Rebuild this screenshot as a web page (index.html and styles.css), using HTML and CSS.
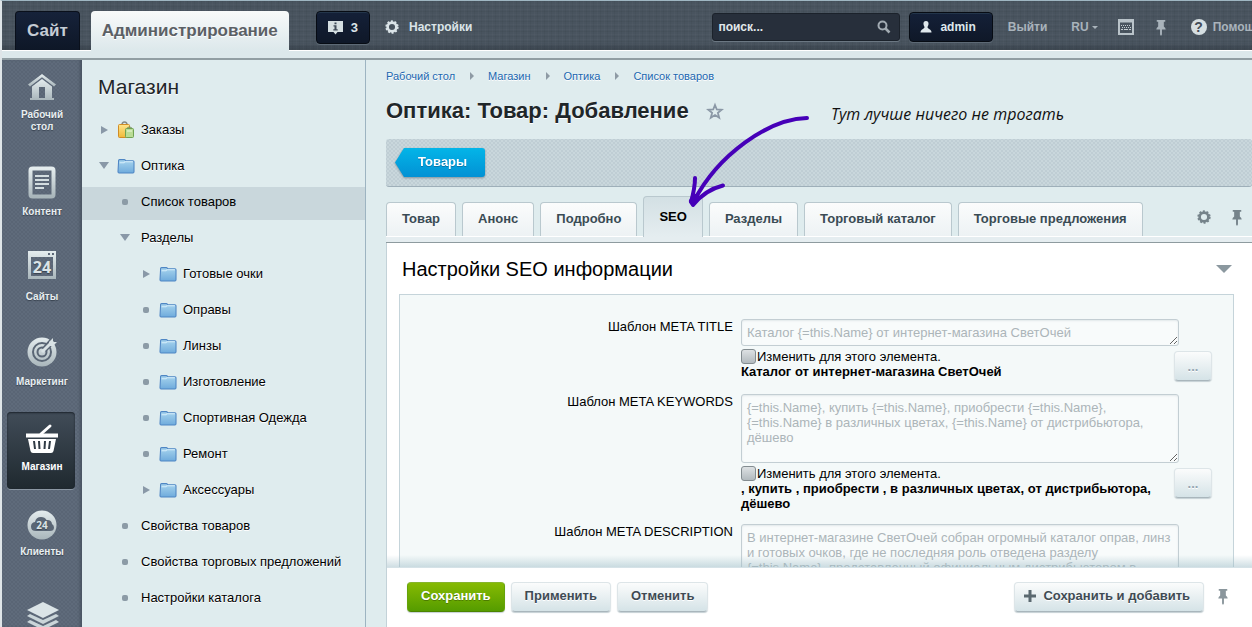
FILE: index.html
```html
<!DOCTYPE html>
<html lang="ru">
<head>
<meta charset="utf-8">
<title>Оптика: Товар: Добавление</title>
<link rel="stylesheet" href="styles.css">
</head>
<body>
<svg class="defs" aria-hidden="true">
  <defs>
    <linearGradient id="silver" x1="0" y1="0" x2="0" y2="1"><stop offset="0" stop-color="#e4ecee"/><stop offset="1" stop-color="#a9b6bb"/></linearGradient>
    <linearGradient id="blue" x1="0" y1="0" x2="0" y2="1"><stop offset="0" stop-color="#a9d5ee"/><stop offset="1" stop-color="#6fabdc"/></linearGradient>
    <linearGradient id="gold" x1="0" y1="0" x2="0" y2="1"><stop offset="0" stop-color="#ffe58a"/><stop offset="1" stop-color="#f0b93a"/></linearGradient>
    <symbol id="folder" viewBox="0 0 16 15"><path d="M1 4V2.500q0-1 1-1h4.500q1 0 1 1h7q1 0 1 1V13q0 1-1 1h-13q-1 0-1-1z" fill="url(#blue)" stroke="#4f86c4"/><path d="M2 4.500h4l1-1h7.500" fill="none" stroke="#d6eefb"/></symbol>
    <symbol id="pin" viewBox="0 0 12 18"><path d="M1.500 1h9v2H9v5q2 1.500 2 3H7v5.500L6 18l-1-1.500V11H1q0-1.500 2-3V3H1.500z" fill="currentColor"/></symbol>
    <symbol id="gear" viewBox="0 0 16 16"><circle cx="8" cy="8" r="5" fill="none" stroke="currentColor" stroke-width="3"/><circle cx="8" cy="8" r="6.700" fill="none" stroke="currentColor" stroke-width="1.800" stroke-dasharray="2.300 1.910"/></symbol>
  </defs>
</svg>
<header class="top">
  <nav class="modes">
    <a class="mode mode-site" href="#">Сайт</a>
    <a class="mode mode-admin" href="#">Администрирование</a>
  </nav>
  <button class="dark-btn notice" type="button">
    <svg width="15" height="15" viewBox="0 0 15 15"><path d="M0 1h15v11H9.500L7.500 14.500 5.500 12H0z" fill="#d5dfe2"/><path d="M6.500 2.500h2v1.700h-2zM5.500 5.300h3v4h1.200v1.200H5.300V9.300h1.200V6.500h-1z" fill="#3f4b58"/></svg>
    <span>3</span>
  </button>
  <a class="settings" href="#"><svg width="14" height="14"><use href="#gear"/></svg><span>Настройки</span></a>
  <div class="top-right">
    <form class="search">
      <input type="text" value="поиск..." aria-label="Поиск">
      <svg width="14" height="14" viewBox="0 0 14 14"><circle cx="5.500" cy="5.500" r="4" fill="none" stroke="#a2abb2" stroke-width="2"/><path d="M8.500 8.500l4 4" stroke="#a2abb2" stroke-width="2.500"/></svg>
    </form>
    <button class="dark-btn user" type="button">
      <svg width="12" height="12" viewBox="0 0 12 12"><path d="M6 0c2 0 2.800 1.500 2.500 3.200C8.300 4.800 7.500 5.500 7.500 6.300 7.500 8 11.500 8 11.500 11.500H.5C.5 8 4.500 8 4.500 6.300 4.500 5.500 3.700 4.800 3.500 3.200 3.200 1.500 4 0 6 0z" fill="#dfe8ec"/></svg>
      <span>admin</span>
    </button>
    <a class="top-link" href="#">Выйти</a>
    <button class="lang" type="button">RU</button>
    <button class="icon-btn keyboard" type="button" aria-label="Горячие клавиши"><svg width="16" height="16" viewBox="0 0 16 16"><path d="M1 1h14v14H1z" fill="none" stroke="#b9c3c9" stroke-width="2"/><path d="M2 2.500h12" stroke="#b9c3c9" stroke-width="2"/><path d="M3 6.500h10M4 8.500h9" stroke="#c4cdd2" stroke-dasharray="1 1"/><path d="M3 10.500h2m1 0h4m1 0h2" stroke="#c4cdd2"/></svg></button>
    <button class="icon-btn" type="button" aria-label="Закрепить"><svg width="12" height="17"><use href="#pin"/></svg></button>
    <a class="help" href="#"><span class="help-mark">?</span>Помощь</a>
  </div>
</header>
<div class="strip"></div>
<div class="layout">
  <nav class="rail">
    <a class="rail-item" href="#"><svg width="36" height="36" viewBox="0 0 36 36"><path d="M18 6L4 16.500l2 2 12-9.200 12 9.200 2-2z" fill="url(#silver)"/><path d="M18 11L8 18.500V30H6v2h24v-2h-2V18.500zM15 19h6v11h-6z" fill="url(#silver)" fill-rule="evenodd"/></svg><span>Рабочий<br>стол</span></a>
    <a class="rail-item" href="#"><svg width="36" height="36" viewBox="0 0 36 36"><rect x="6.500" y="3.500" width="23" height="28" rx="2" fill="none" stroke="url(#silver)" stroke-width="4"/><path d="M11 11h14M11 15h14M11 19h14M11 23h9" stroke="#d3dde0" stroke-width="2"/></svg><span>Контент</span></a>
    <a class="rail-item" href="#"><svg width="36" height="36" viewBox="0 0 36 36"><path d="M4 1h28v28H4zM7 7v19h22V7zM24 3v2h2V3zM28 3v2h2V3z" fill="url(#silver)" fill-rule="evenodd"/><text class="digits" x="18" y="23" font-size="16">24</text></svg><span>Сайты</span></a>
    <a class="rail-item" href="#"><svg width="36" height="36" viewBox="0 0 36 36"><circle cx="18" cy="17" r="14.500" fill="url(#silver)"/><circle cx="18" cy="17" r="9" fill="none" stroke="#5a6675" stroke-width="2"/><circle cx="18" cy="17" r="4.500" fill="none" stroke="#5a6675" stroke-width="2"/><path d="M20 15L30 4" stroke="#5a6675" stroke-width="6"/><path d="M18 17L29 6" stroke="#d9e2e5" stroke-width="3"/><path d="M25 7l4-4v4h4l-4 4h-4z" fill="#d9e2e5"/></svg><span>Маркетинг</span></a>
    <a class="rail-item rail-active" href="#"><svg width="36" height="36" viewBox="0 0 36 36"><path d="M2 13.500h32v4H2zM4 19h28l-2.500 12q-.500 2-2.500 2H9q-2 0-2.500-2z" fill="#fff"/><path d="M17 14L26 6" stroke="#fff" stroke-width="3" stroke-linecap="round"/><path d="M10 21l1 8M15 21l.5 8M21 21l-.5 8M26 21l-1 8" stroke="#303b45" stroke-width="2"/></svg><span>Магазин</span></a>
    <a class="rail-item" href="#"><svg width="36" height="36" viewBox="0 0 36 36"><circle cx="18" cy="20" r="14.500" fill="url(#silver)"/><path d="M12 26q-5 0-5-4.500 0-4 4-4.500Q12 12 17 12q4 0 5.500 3 5-.500 5.500 4 2 1 2 3.500 0 3.500-4 3.500z" fill="#5a6675"/><text class="digits" x="18" y="24" font-size="10">24</text></svg><span>Клиенты</span></a>
    <a class="rail-item" href="#" aria-label="Сервисы"><svg width="36" height="46" viewBox="0 0 36 46"><path d="M19 12l16 8-16 8-16-8z" fill="#dbe4e7"/><path d="M3 26l3-2 13 6 13-6 3 2-16 8zM3 32l3-2 13 6 13-6 3 2-16 8z" fill="#cad5d9"/></svg></a>
  </nav>
  <aside class="menu">
    <h2 class="menu-title">Магазин</h2>
    <ul class="tree">
      <li><a class="row" href="#"><i class="mark closed"></i><svg width="18" height="18" viewBox="0 0 18 18"><path d="M5 4q0-3 2.500-3T10 4" fill="none" stroke="#878b86" stroke-width="1.500"/><rect x="1.500" y="3.500" width="11" height="13" rx="1" fill="url(#gold)" stroke="#d08c26"/><path d="M10 8q0-2 2.500-2T15 8" fill="none" stroke="#789061"/><rect x="8.500" y="7.500" width="8" height="9" rx="1" fill="#b9dc95" stroke="#6fa253"/><path d="M10 10h5" stroke="#edf8df"/></svg>Заказы</a></li>
      <li><a class="row" href="#"><i class="mark open"></i><svg width="18" height="16"><use href="#folder"/></svg>Оптика</a></li>
      <li><a class="row level-2 selected" href="#"><i class="mark dot"></i>Список товаров</a></li>
      <li><a class="row level-2" href="#"><i class="mark open"></i>Разделы</a></li>
      <li><a class="row level-3" href="#"><i class="mark closed"></i><svg width="18" height="16"><use href="#folder"/></svg>Готовые очки</a></li>
      <li><a class="row level-3" href="#"><i class="mark dot"></i><svg width="18" height="16"><use href="#folder"/></svg>Оправы</a></li>
      <li><a class="row level-3" href="#"><i class="mark dot"></i><svg width="18" height="16"><use href="#folder"/></svg>Линзы</a></li>
      <li><a class="row level-3" href="#"><i class="mark dot"></i><svg width="18" height="16"><use href="#folder"/></svg>Изготовление</a></li>
      <li><a class="row level-3" href="#"><i class="mark dot"></i><svg width="18" height="16"><use href="#folder"/></svg>Спортивная Одежда</a></li>
      <li><a class="row level-3" href="#"><i class="mark dot"></i><svg width="18" height="16"><use href="#folder"/></svg>Ремонт</a></li>
      <li><a class="row level-3" href="#"><i class="mark closed"></i><svg width="18" height="16"><use href="#folder"/></svg>Аксессуары</a></li>
      <li><a class="row level-2" href="#"><i class="mark dot"></i>Свойства товаров</a></li>
      <li><a class="row level-2" href="#"><i class="mark dot"></i>Свойства торговых предложений</a></li>
      <li><a class="row level-2" href="#"><i class="mark dot"></i>Настройки каталога</a></li>
    </ul>
  </aside>
  <main class="main">
    <nav class="crumbs">
      <a href="#">Рабочий стол</a><i></i><a href="#">Магазин</a><i></i><a href="#">Оптика</a><i></i><a href="#">Список товаров</a>
    </nav>
    <div class="title-row">
      <h1 class="title">Оптика: Товар: Добавление</h1>
      <button class="icon-btn" type="button" aria-label="В избранное"><svg width="18" height="18" viewBox="0 0 18 18"><path d="M9 3l1.800 4.500 4.900.3-3.800 3.100 1.300 4.800L9 13l-4.200 2.700 1.300-4.800L2.300 7.800l4.900-.3z" fill="none" stroke="#8b98a6" stroke-width="1.800"/></svg></button>
    </div>
    <div class="toolbar">
      <a class="back" href="#"><span>Товары</span></a>
    </div>
    <div class="tabs">
      <button class="tab" type="button">Товар</button>
      <button class="tab" type="button">Анонс</button>
      <button class="tab" type="button">Подробно</button>
      <button class="tab tab-active" type="button">SEO</button>
      <button class="tab" type="button">Разделы</button>
      <button class="tab" type="button">Торговый каталог</button>
      <button class="tab" type="button">Торговые предложения</button>
      <span class="tab-tools">
        <button class="icon-btn" type="button" aria-label="Настроить"><svg width="14" height="14"><use href="#gear"/></svg></button>
        <button class="icon-btn" type="button" aria-label="Закрепить вкладки"><svg width="12" height="17"><use href="#pin"/></svg></button>
      </span>
    </div>
    <div class="tab-line"></div>
    <section class="panel">
      <div class="panel-scroll">
        <div class="panel-head">
          <h2 class="panel-title">Настройки SEO информации</h2>
          <button class="icon-btn collapse" type="button" aria-label="Свернуть"></button>
        </div>
        <div class="fields">
          <label class="label" for="meta-title">Шаблон META TITLE</label>
          <div class="field">
            <textarea class="area area-1" id="meta-title">Каталог {=this.Name} от интернет-магазина СветОчей</textarea>
            <div class="hint">
              <div class="hint-text"><label class="check"><input type="checkbox">Изменить для этого элемента.</label><b>Каталог от интернет-магазина СветОчей</b></div>
              <button class="btn more" type="button">...</button>
            </div>
          </div>
          <label class="label" for="meta-keys">Шаблон META KEYWORDS</label>
          <div class="field">
            <textarea class="area area-3" id="meta-keys">{=this.Name}, купить {=this.Name}, приобрести {=this.Name}, {=this.Name} в различных цветах, {=this.Name} от дистрибьютора, дёшево</textarea>
            <div class="hint">
              <div class="hint-text"><label class="check"><input type="checkbox">Изменить для этого элемента.</label><b>, купить , приобрести , в различных цветах, от дистрибьютора, дёшево</b></div>
              <button class="btn more" type="button">...</button>
            </div>
          </div>
          <label class="label" for="meta-desc">Шаблон META DESCRIPTION</label>
          <div class="field">
            <textarea class="area area-3" id="meta-desc">В интернет-магазине СветОчей собран огромный каталог оправ, линз и готовых очков, где не последняя роль отведена разделу {=this.Name}, представленный официальным дистрибьютором в</textarea>
          </div>
        </div>
      </div>
      <footer class="actions">
        <button class="btn btn-save" type="button">Сохранить</button>
        <button class="btn" type="button">Применить</button>
        <button class="btn" type="button">Отменить</button>
        <button class="btn btn-add" type="button"><svg width="12" height="12" viewBox="0 0 12 12"><path d="M6 0v12M0 6h12" stroke="#5b6970" stroke-width="3"/></svg>Сохранить и добавить</button>
        <button class="icon-btn" type="button" aria-label="Закрепить панель"><svg width="12" height="17"><use href="#pin"/></svg></button>
      </footer>
    </section>
    <div class="note">
      <svg width="130" height="100" viewBox="0 0 130 100"><g fill="none" stroke="#4600b8" stroke-width="4" stroke-linecap="round" stroke-linejoin="round"><path d="M121 9C82 10 32 46 8 92"/><path d="M9 69q0 10-4 24l2 3q12-15 30-19.500"/><path d="M6 92l4-4" stroke-width="6"/></g></svg>
      <span>Тут лучше ничего не трогать</span>
    </div>
  </main>
</div>
</body>
</html>
```
FILE: styles.css
```css
* { box-sizing: border-box; }
body {
  margin: 0;
  height: 100vh;
  display: flex;
  flex-direction: column;
  overflow: hidden;
  border-left: 2px solid #dfe5e8;
  border-top: 1px solid #9fb6c2;
  background: #dfecee;
  font: 13px/15px "Liberation Sans", Arial, sans-serif;
  color: #000;
}
a { color: inherit; text-decoration: none; }
button { font: inherit; color: inherit; border: 0; padding: 0; background: none; white-space: nowrap; }
h1, h2, ul { margin: 0; padding: 0; }
svg { display: block; flex: none; }
.defs { position: absolute; width: 0; height: 0; }
.icon-btn { display: flex; align-items: center; justify-content: center; }

/* top bar */
.top {
  flex: none;
  height: 49px;
  display: flex;
  align-items: flex-start;
  padding: 10px 0 0 13px;
  white-space: nowrap;
  font-weight: bold;
  font-size: 12px;
  color: #dbe4e8;
  background:
    repeating-linear-gradient(90deg, rgba(255,255,255,.02) 0 1px, transparent 1px 3px, rgba(0,0,0,.04) 3px 4px, transparent 4px 7px),
    repeating-linear-gradient(0deg, rgba(255,255,255,.02) 0 1px, transparent 1px 3px, rgba(0,0,0,.04) 3px 4px, transparent 4px 5px),
    linear-gradient(#49545f 85%, #3a444e);
}
.modes { display: flex; gap: 11px; }
.mode { height: 39px; line-height: 39px; padding: 0 11px; border-radius: 4px 4px 0 0; font-size: 17px; }
.mode-site { background: linear-gradient(#16223a, #0e1727); border: 1px solid #0a101b; border-bottom: 0; color: #c5ccd4; line-height: 38px; }
.mode-admin { position: relative; height: 40px; background: linear-gradient(#f8fafa, #dce8eb); color: #5b6065; text-shadow: 0 1px #fff; }
.dark-btn {
  display: flex;
  align-items: center;
  border: 1px solid #070c14;
  border-radius: 4px;
  background: linear-gradient(#142038, #0f1828);
  box-shadow: inset 0 1px #23354a, 0 1px #5d6975;
}
.notice { height: 33px; margin-left: 27px; padding: 0 11px; gap: 8px; font-size: 13px; }
.settings { display: flex; align-items: center; gap: 10px; height: 32px; margin-left: 15px; }
.top-right { display: flex; align-items: center; margin-left: auto; height: 32px; margin-right: -10px; color: #a9b3bb; }
.search { display: flex; align-items: center; width: 188px; height: 28px; padding: 0 8px 0 5px; background: #272f3b; border: 1px solid #1b222b; border-radius: 3px; box-shadow: 0 1px #6b7782; }
.search input { flex: 1; min-width: 0; border: 0; padding: 0; background: none; outline: 0; font: bold 12px "Liberation Sans", Arial, sans-serif; color: #e1e8eb; }
.user { height: 30px; margin-left: 9px; padding: 0 16px 0 10px; gap: 8px; color: #dfe8ec; }
.top-link { margin-left: 15px; }
.lang { display: flex; align-items: center; gap: 3px; margin-left: 24px; }
.lang::after { content: ""; border: 3px solid transparent; border-top-color: #a9b3bb; border-bottom: 0; }
.keyboard { margin: 0 21px 0 20px; }
.help { display: flex; align-items: center; gap: 6px; margin-left: 24px; }
.help-mark { width: 16px; height: 16px; border-radius: 50%; background: #d5dee1; color: #424c57; text-align: center; line-height: 16px; font-size: 14px; }
.strip { flex: none; height: 10px; background: #dce8eb; border-top: 1px solid #fff; border-bottom: 2px solid #919ea3; }

.layout { flex: 1; min-height: 0; display: flex; }

/* section rail */
.rail {
  flex: none;
  width: 80px;
  overflow: hidden;
  display: flex;
  flex-direction: column;
  gap: 8px;
  background-color: #5f6b7b;
  background-image: radial-gradient(#556070 20%, transparent 30%), radial-gradient(#556070 20%, transparent 30%);
  background-size: 4px 4px;
  background-position: 0 0, 2px 2px;
  box-shadow: inset -3px 0 3px -1px #495462;
}
.rail-item { flex: none; display: flex; flex-direction: column; align-items: center; gap: 5px; margin: 0 7px 0 5px; padding: 8px 0 16px 2px; border-radius: 4px; text-align: center; font-weight: bold; font-size: 10px; line-height: 12px; color: #e8eef0; text-shadow: 0 1px 1px #38424f; }
.rail-active { background: linear-gradient(#414c58, #1f292f); box-shadow: inset 0 1px 2px #1b232b, 0 1px #8b97a3; color: #fff; }
.digits { fill: #dbe4e7; font-family: "Open Sans", sans-serif; font-weight: bold; text-anchor: middle; }

/* tree menu */
.menu { flex: none; width: 284px; overflow: hidden; border-right: 1px solid #9db4c1; }
.menu-title { padding: 15px 0 16px 16px; font-size: 21px; line-height: 24px; font-weight: normal; color: #1f2629; text-shadow: 0 1px #fff; }
.tree { list-style: none; display: flex; flex-direction: column; gap: 3px; }
.row { display: flex; align-items: center; height: 33px; padding: 0 0 4px 16px; white-space: nowrap; text-shadow: 0 1px #fff; }
.row svg { margin: 1px 6px 0 7px; }
.level-2 { padding-left: 37px; }
.level-2 .mark { margin-right: 10px; }
.level-3 { padding-left: 58px; }
.selected { background: #c9d7dc; text-shadow: none; }
.mark { flex: none; width: 12px; height: 12px; display: flex; align-items: center; justify-content: center; }
.mark::before { content: ""; }
.closed::before { border: 4px solid transparent; border-left: 7px solid #8998a7; border-right: 0; }
.open::before { border: 5px solid transparent; border-top: 7px solid #8998a7; border-bottom: 0; }
.dot::before { width: 6px; height: 6px; border-radius: 2px; background: #8c9ba6; }

/* page */
.main { flex: 1; min-width: 0; position: relative; display: flex; flex-direction: column; padding: 9px 0 0 20px; }
.crumbs { display: flex; align-items: center; font-size: 11px; line-height: 14px; color: #2067b0; text-shadow: 0 1px #fff; }
.crumbs i { width: 4px; margin: 0 14px 0 15px; border: 4px solid transparent; border-left-color: #8e9aa4; border-right: 0; }
.title-row { display: flex; align-items: center; gap: 17px; padding: 14px 0; }
.title { font-size: 22px; line-height: 28px; color: #1f2629; text-shadow: 0 1px #fff; white-space: nowrap; }
.toolbar {
  flex: none;
  height: 48px;
  padding: 9px;
  border-radius: 3px;
  border-bottom: 1px solid #9eafb9;
  background-color: #c9d7dc;
  background-image: radial-gradient(#b6c5cc 20%, transparent 30%), radial-gradient(#b6c5cc 20%, transparent 30%);
  background-size: 4px 4px;
  background-position: 0 0, 2px 2px;
}
.back { display: inline-block; filter: drop-shadow(0 1px 1px #7d909b); font-weight: bold; color: #fff; }
.back span { display: block; height: 29px; line-height: 27px; padding: 0 18px 0 23px; border-radius: 3px; background: linear-gradient(#03b5e8, #0291d4); clip-path: polygon(9px 0, 100% 0, 100% 100%, 9px 100%, 0 50%); text-shadow: 0 1px #0a78ab; }
.tabs { flex: none; display: flex; align-items: flex-end; gap: 6px; height: 49px; }
.tab { flex: none; height: 34px; padding: 0 15px 2px; border: 1px solid #b9c8ce; border-bottom: 0; border-radius: 4px 4px 0 0; background: linear-gradient(#fbfcfc, #edf2f4); font-weight: bold; color: #3a4b54; }
.tab-active { position: relative; height: 41px; margin-bottom: -1px; background: linear-gradient(#d3e0e4, #e5edf0); color: #000; }
.tab-tools { display: flex; align-items: center; gap: 20px; margin-left: auto; padding-right: 9px; height: 38px; color: #75838a; }
.tab-line { flex: none; height: 7px; background: #e5edf0; border-top: 1px solid #fff; border-bottom: 1px solid #8e9b9f; }
.panel { flex: 1; min-height: 0; display: flex; flex-direction: column; background: #fff; border-left: 1px solid #c3d2d8; }
.panel-scroll { flex: 1; min-height: 0; overflow: hidden; position: relative; padding: 0 18px 0 12px; }
.panel-scroll::after { content: ""; position: absolute; left: 0; right: 0; bottom: 0; height: 12px; background: linear-gradient(rgba(160,190,200,0), rgba(160,190,200,.5)); }
.panel-head { display: flex; align-items: center; justify-content: space-between; height: 51px; padding: 0 2px 0 3px; }
.panel-title { font-size: 20px; line-height: 24px; font-weight: normal; }
.collapse::before { content: ""; border: 8px solid transparent; border-top-color: #8b989f; border-bottom: 0; }
.fields { display: grid; grid-template-columns: 41% 1fr; column-gap: 8px; row-gap: 13px; padding: 24px 21px 40px 0; border: 1px solid #c5d4da; border-bottom: 0; background: #f4f9f9; }
.label { text-align: right; }
.area { display: block; width: calc(100% - 33px); padding: 5px; border: 1px solid #c3ced3; border-radius: 3px; background: #f8fbfb; box-shadow: inset 0 1px 2px #e2e8ea; font: inherit; color: #acb5b9; overflow: hidden; outline: 0; }
.area-1 { height: 27px; }
.area-3 { height: 69px; }
.hint { display: flex; align-items: flex-start; margin-top: 3px; }
.hint-text { flex: 1; padding-right: 16px; }
.hint-text b { display: block; }
.check { display: flex; align-items: center; height: 15px; }
.check input { appearance: none; flex: none; width: 15px; height: 15px; margin: 0 1px 0 0; border: 1px solid #838c90; border-radius: 3px; background: linear-gradient(#dde1e3, #b2babe); }
.btn { flex: none; height: 30px; padding: 0 13px 2px; border: 1px solid #dde5e8; border-bottom-color: #a9b6bc; border-radius: 4px; background: linear-gradient(#fbfcfc, #d5e3e7); box-shadow: 0 1px 1px #c5d0d4; font-weight: bold; color: #3f4b54; text-shadow: 0 1px #fff; }
.more { width: 38px; margin-top: 2px; padding: 0; color: #95a5b2; }
.actions { flex: none; height: 60px; display: flex; align-items: center; gap: 6px; padding: 0 23px 2px 20px; border-top: 1px solid #d5e2e7; color: #8a969c; }
.btn-save { background: linear-gradient(#86ba02, #559c00); border-color: #86b52c #66a30a #4c8400; color: #fff; text-shadow: 0 1px #4d7d00; }
.btn-add { display: flex; align-items: center; gap: 7px; margin-left: auto; padding: 0 13px 2px 9px; }
.btn-add + .icon-btn { margin-left: 7px; }

/* hand-drawn remark over the page */
.note { position: absolute; left: 320px; top: 49px; display: flex; align-items: flex-start; gap: 15px; font: italic 16px/22px "Open Sans", "Noto Sans", sans-serif; color: #111; white-space: nowrap; pointer-events: none; }
.note span { margin-top: -6px; }
```
